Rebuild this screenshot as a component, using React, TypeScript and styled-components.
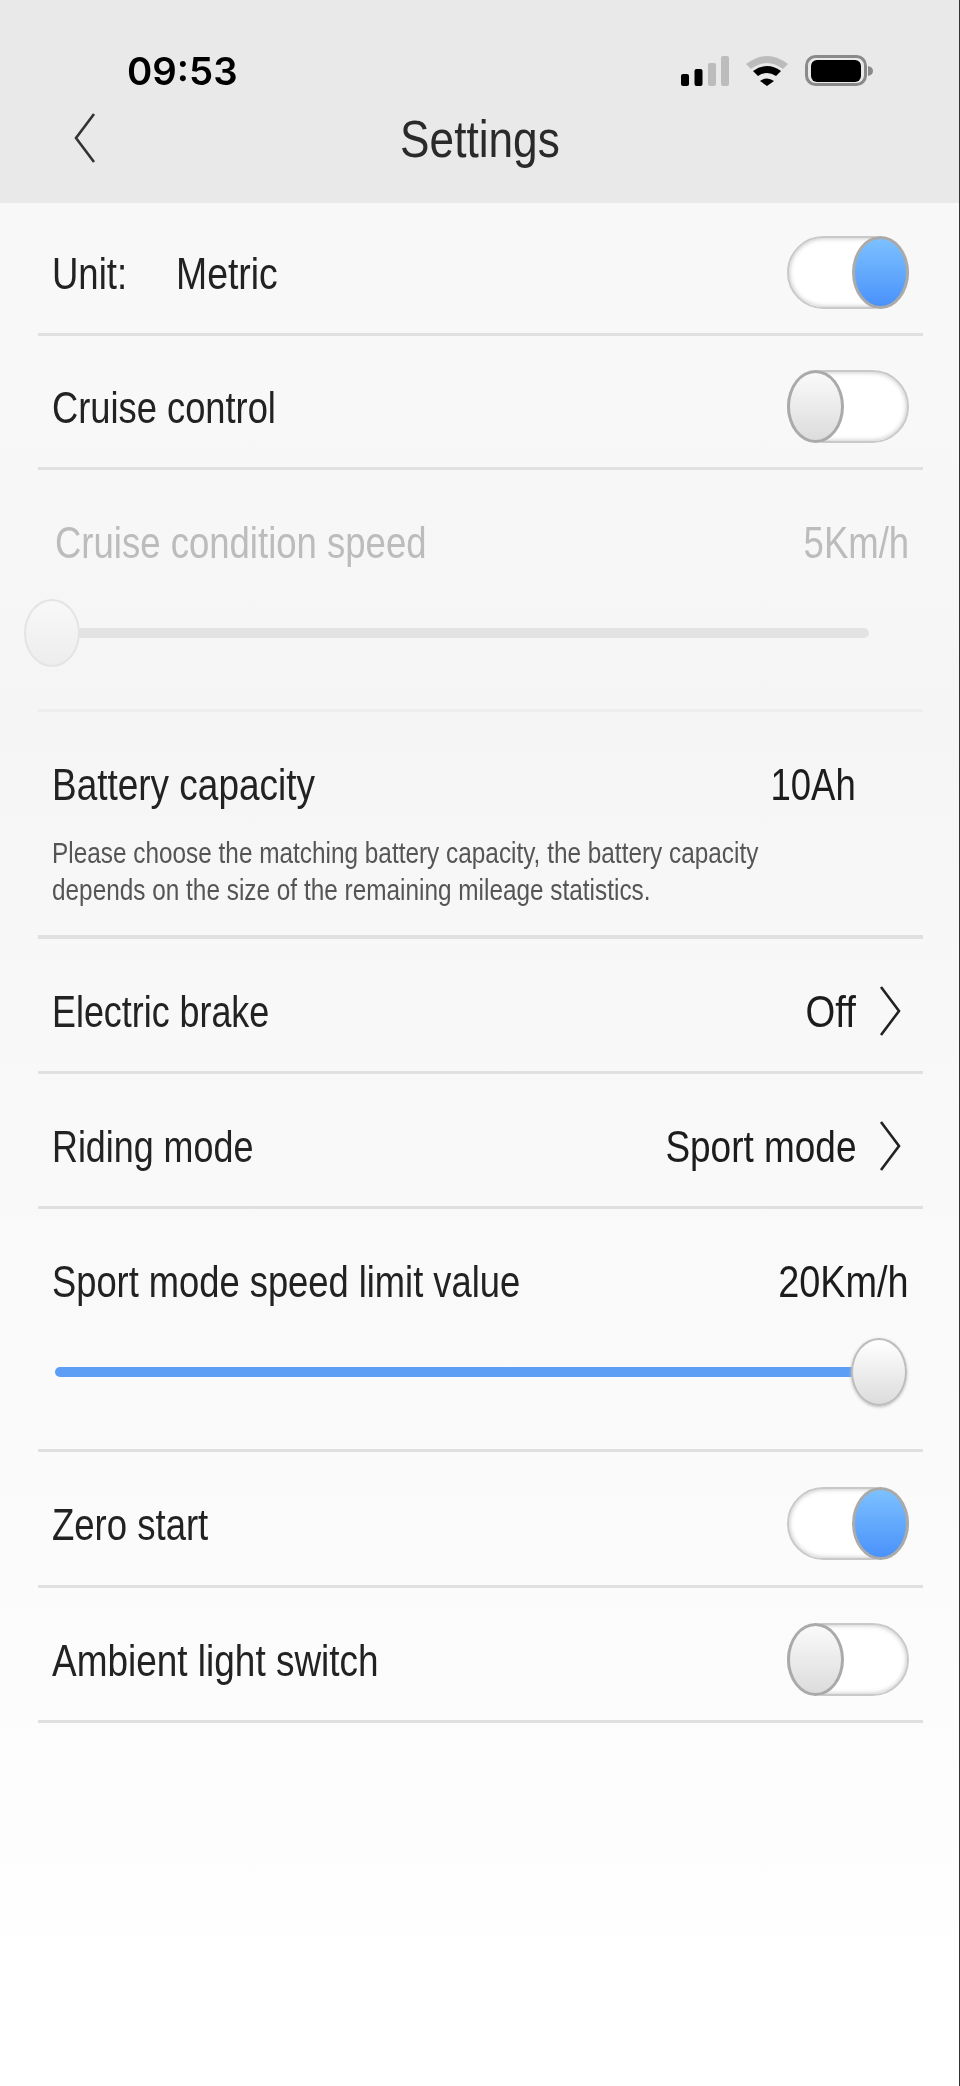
import React from "react";
import styled, { createGlobalStyle, css } from "styled-components";

const Global = createGlobalStyle`
  html, body { margin: 0; padding: 0; background: #fff; }
`;

const Page = styled.div`
  box-sizing: border-box;
  width: 960px;
  height: 2086px;
  border-right: 1px solid #333;
  overflow: hidden;
  font-family: "Liberation Sans", Arial, sans-serif;
  background: linear-gradient(180deg, #f8f8f8 0, #f8f8f8 400px, #f5f5f5 720px, #f8f8f8 1000px, #fafafa 1400px, #fcfcfc 1720px, #ffffff 2000px);
`;

const Header = styled.header`
  height: 203px;
  background: #e9e9e9;
  padding-top: 40px;
  box-sizing: border-box;
`;

const StatusBar = styled.div`
  height: 62px;
  display: flex;
  align-items: center;
  justify-content: space-between;
  padding: 0 86px 0 127px;
`;

const Time = styled.div`
  font-family: Inter, "Liberation Sans", sans-serif;
  font-size: 38px;
  font-weight: 600;
  color: #000;
  transform: scaleX(1.01);
  transform-origin: left center;
`;

const StatusIcons = styled.div`
  display: flex;
  align-items: center;
  gap: 17px;
`;

const Nav = styled.nav`
  height: 72px;
  display: grid;
  grid-template-columns: 1fr auto 1fr;
  align-items: center;
  padding-left: 74px;
`;

const BackIcon = styled.svg`
  width: 22px;
  height: 52px;
  display: block;
`;

const Title = styled.h1`
  margin: 1px 0 0 -74px;
  font-size: 52px;
  font-weight: 400;
  color: #2a2a2a;
  transform: scaleX(0.85);
  filter: blur(0.5px);
`;

const List = styled.main`
  padding: 0 36px 0 38px;
`;

const Row = styled.section<{ $h?: number; $faint?: boolean; $thick?: boolean; $pt?: number }>`
  box-sizing: border-box;
  height: ${(p) => p.$h ?? 135}px;
  padding: ${(p) => p.$pt ?? 10}px 14px 0;
  border-bottom: ${(p) => (p.$thick ? 4 : 3)}px solid ${(p) => (p.$faint ? "#eeeeee" : "#e0e0e0")};
`;

const RowHead = styled.div`
  height: 122px;
  display: flex;
  align-items: center;
  justify-content: space-between;
`;

const Group = styled.div`
  display: flex;
  align-items: center;
`;

const Label = styled.span<{ $disabled?: boolean; $w?: number; $sx?: number }>`
  display: inline-block;
  flex: none;
  margin-top: 3px;
  width: ${(p) => (p.$w ? `${p.$w}px` : "auto")};
  font-size: 44px;
  color: #222;
  white-space: nowrap;
  transform: scaleX(${(p) => p.$sx ?? 0.83});
  transform-origin: left center;
  filter: blur(0.5px);
  ${(p) =>
    p.$disabled &&
    css`
      color: #bcbcbc;
      margin-left: 3px;
    `}
`;

const Value = styled.span<{ $disabled?: boolean; $mr?: number; $sx?: number }>`
  display: inline-block;
  margin-top: 3px;
  font-size: 44px;
  color: ${(p) => (p.$disabled ? "#bcbcbc" : "#1c1c1c")};
  white-space: nowrap;
  margin-right: ${(p) => p.$mr ?? 0}px;
  transform: scaleX(${(p) => p.$sx ?? 0.83});
  transform-origin: right center;
  filter: blur(0.5px);
`;

const Chevron = styled.svg`
  width: 22px;
  height: 52px;
  display: block;
  margin: 1px 8px 0 23px;
`;

const SwitchTrack = styled.div<{ $on?: boolean }>`
  box-sizing: border-box;
  position: relative;
  width: 122px;
  height: 73px;
  border-radius: 37px;
  background: #fff;
  border: 2px solid #c9c9c9;
  box-shadow: inset 0 0 5px #bbb;
  filter: blur(0.5px);
`;

const SwitchKnob = styled.div<{ $on?: boolean }>`
  box-sizing: border-box;
  position: absolute;
  top: -2px;
  ${(p) => (p.$on ? "right: -2px;" : "left: -2px;")}
  width: 57px;
  height: 73px;
  border-radius: 50%;
  border: 3px solid #aaa;
  background: ${(p) =>
    p.$on
      ? "linear-gradient(180deg, #7cc1ff 0%, #4a92fb 100%)"
      : "linear-gradient(180deg, #fafafa 0%, #dcdcdc 100%)"};
`;

const SliderWrap = styled.div`
  height: 62px;
  display: flex;
  align-items: center;
  padding-left: 3px;
`;

const Track = styled.div<{ $on?: boolean }>`
  position: relative;
  width: 814px;
  height: 10px;
  border-radius: 5px;
  background: ${(p) => (p.$on ? "#5c9df5" : "#e3e3e3")};
`;

const Thumb = styled.div<{ $on?: boolean }>`
  box-sizing: border-box;
  position: absolute;
  top: -29px;
  ${(p) => (p.$on ? "left: 796px;" : "left: -31px;")}
  width: 56px;
  height: 68px;
  border-radius: 50%;
  border: 2px solid ${(p) => (p.$on ? "#bdbdbd" : "#e4e4e4")};
  background: ${(p) =>
    p.$on
      ? "linear-gradient(180deg, #ffffff 0%, #dcdcdc 100%)"
      : "linear-gradient(180deg, #f8f8f8 0%, #ededed 100%)"};
  ${(p) => p.$on && "box-shadow: 0 1px 3px #bbb;"}
`;

const BatteryHead = styled.div`
  height: 80px;
  margin-top: 21px;
  display: flex;
  align-items: center;
  justify-content: space-between;
`;

const Desc = styled.p`
  margin: 12px 0 0;
  font-size: 29px;
  line-height: 37px;
  color: #555;
  white-space: nowrap;
  transform: scaleX(0.84);
  transform-origin: left center;
  filter: blur(0.4px);
`;

const Toggle = ({ on }: { on?: boolean }) => (
  <SwitchTrack $on={on}>
    <SwitchKnob $on={on} />
  </SwitchTrack>
);

const ChevronRight = () => (
  <Chevron viewBox="0 0 22 52">
    <path d="M2 2 L20 26 L2 50" fill="none" stroke="#222" strokeWidth="2.6" />
  </Chevron>
);

export default function App() {
  return (
    <Page>
      <Global />
      <Header>
        <StatusBar>
          <Time>09:53</Time>
          <StatusIcons>
            <svg width="48" height="30" viewBox="0 0 48 30">
              <rect x="0" y="18" width="8" height="12" rx="2" fill="#000" />
              <rect x="13.5" y="13" width="8" height="17" rx="2" fill="#000" />
              <rect x="27" y="7" width="8" height="23" rx="2" fill="#bcbcbc" />
              <rect x="40" y="0" width="8" height="30" rx="2" fill="#bcbcbc" />
            </svg>
            <svg width="42" height="30" viewBox="0 0 42 30">
              <path d="M0 8 Q21 -8 42 8 L37 13 Q21 1 5 13 Z" fill="#bcbcbc" />
              <path d="M7 15 Q21 5 35 15 L30 20 Q21 14 12 20 Z" fill="#000" />
              <path d="M14 25 Q21 20 28 25 L21 30 Z" fill="#000" />
            </svg>
            <svg width="68" height="32" viewBox="0 0 68 32">
              <rect x="1.5" y="1.5" width="59" height="28" rx="9" fill="none" stroke="#8a8a8a" strokeWidth="3" />
              <rect x="6" y="5" width="50" height="22" rx="6" fill="#000" />
              <path d="M63 11 Q68 12 68 16 Q68 20 63 21 Z" fill="#8a8a8a" />
            </svg>
          </StatusIcons>
        </StatusBar>
        <Nav>
          <BackIcon viewBox="0 0 22 52">
            <path d="M20 2 L2 26 L20 50" fill="none" stroke="#333" strokeWidth="2.6" />
          </BackIcon>
          <Title>Settings</Title>
          <span />
        </Nav>
      </Header>
      <List>
        <Row $h={133} $pt={8}>
          <RowHead>
            <Group>
              <Label $w={124}>Unit:</Label>
              <Label $sx={0.85}>Metric</Label>
            </Group>
            <Toggle on />
          </RowHead>
        </Row>
        <Row $h={134} $pt={9}>
          <RowHead>
            <Label $sx={0.825}>Cruise control</Label>
            <Toggle />
          </RowHead>
        </Row>
        <Row $h={242} $faint>
          <RowHead>
            <Label $disabled>Cruise condition speed</Label>
            <Value $disabled>5Km/h</Value>
          </RowHead>
          <SliderWrap>
            <Track>
              <Thumb />
            </Track>
          </SliderWrap>
        </Row>
        <Row $h={227} $thick>
          <BatteryHead>
            <Label $sx={0.84}>Battery capacity</Label>
            <Value $mr={53}>10Ah</Value>
          </BatteryHead>
          <Desc>
            Please choose the matching battery capacity, the battery capacity
            <br />
            depends on the size of the remaining mileage statistics.
          </Desc>
        </Row>
        <Row>
          <RowHead>
            <Label $sx={0.815}>Electric brake</Label>
            <Group>
              <Value $sx={0.87}>Off</Value>
              <ChevronRight />
            </Group>
          </RowHead>
        </Row>
        <Row>
          <RowHead>
            <Label $sx={0.815}>Riding mode</Label>
            <Group>
              <Value $sx={0.84}>Sport mode</Value>
              <ChevronRight />
            </Group>
          </RowHead>
        </Row>
        <Row $h={243}>
          <RowHead>
            <Label $sx={0.825}>Sport mode speed limit value</Label>
            <Value $sx={0.86}>20Km/h</Value>
          </RowHead>
          <SliderWrap>
            <Track $on>
              <Thumb $on />
            </Track>
          </SliderWrap>
        </Row>
        <Row $h={136}>
          <RowHead>
            <Label>Zero start</Label>
            <Toggle on />
          </RowHead>
        </Row>
        <Row>
          <RowHead>
            <Label $sx={0.84}>Ambient light switch</Label>
            <Toggle />
          </RowHead>
        </Row>
      </List>
    </Page>
  );
}
